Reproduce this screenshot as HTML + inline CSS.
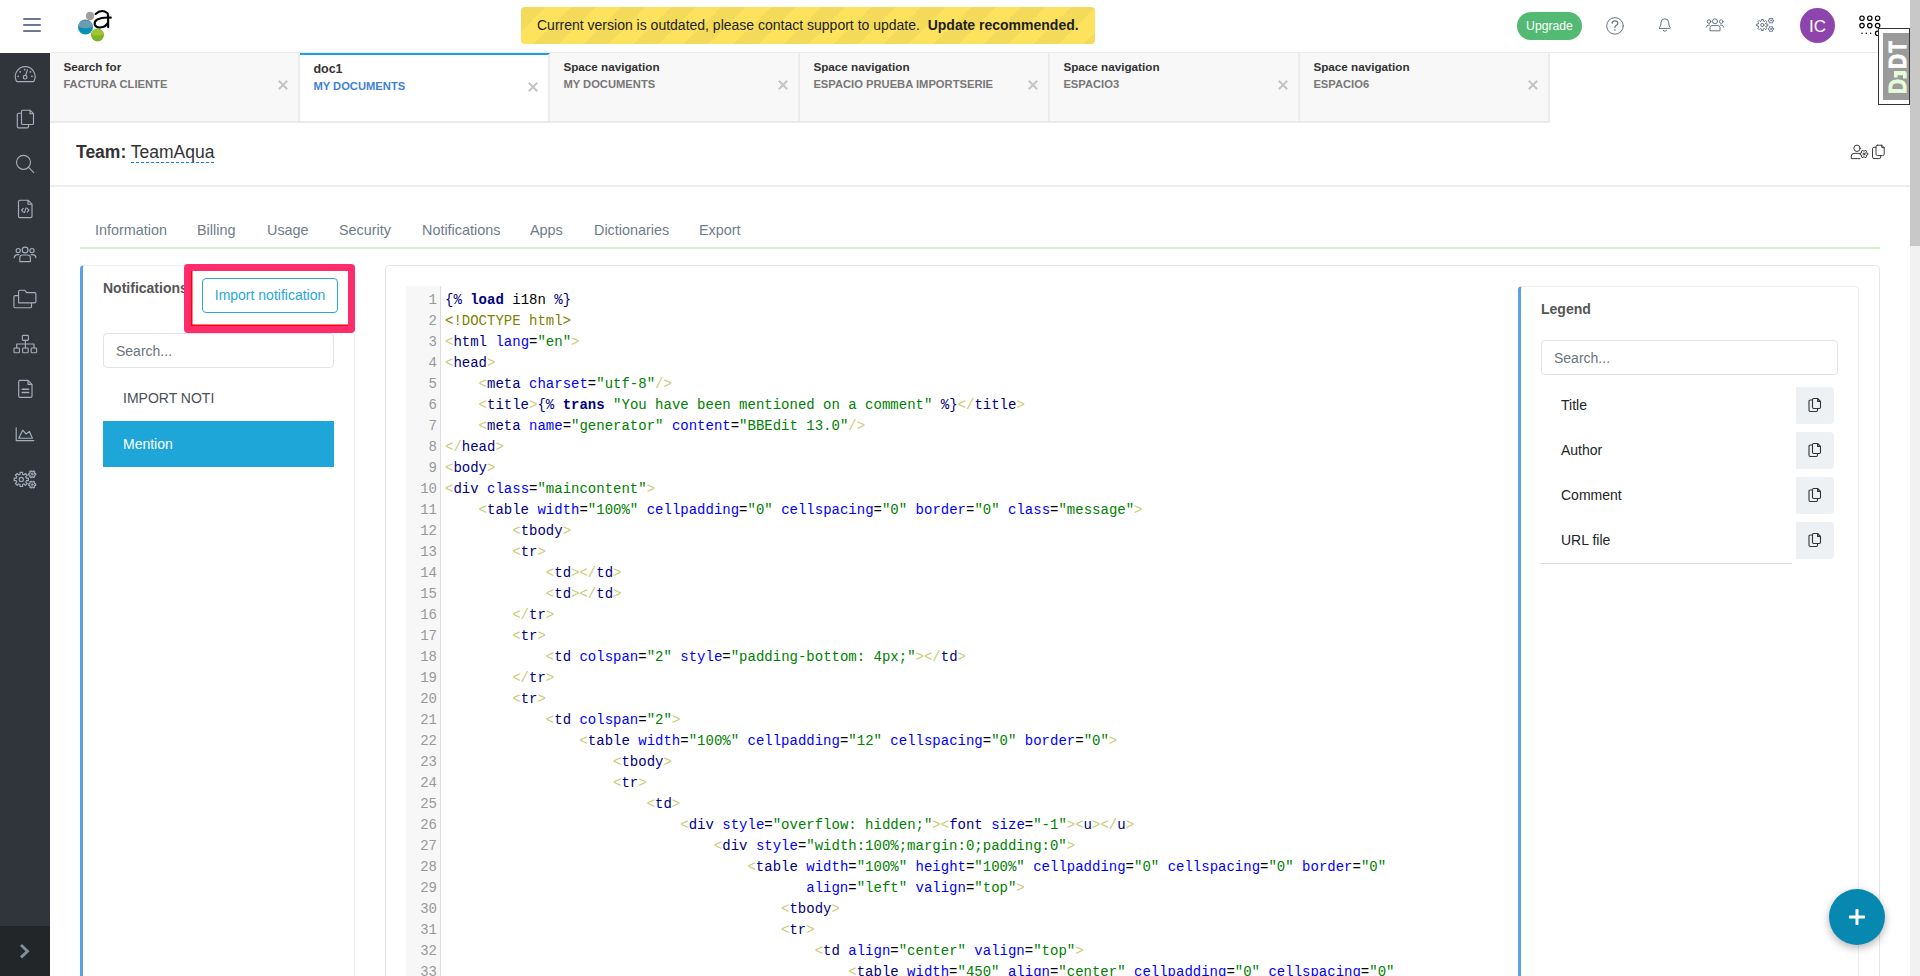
<!DOCTYPE html>
<html><head><meta charset="utf-8">
<style>
*{box-sizing:border-box}
html,body{margin:0;padding:0;width:1920px;height:976px;overflow:hidden;background:#fff;font-family:"Liberation Sans",sans-serif;color:#333}
.abs{position:absolute}
#hdr{position:absolute;left:0;top:0;width:1910px;height:52px;background:#fff}
.hamb{position:absolute;left:23px;width:18px;height:2px;background:#6b7a8a;border-radius:1px}
#banner{position:absolute;left:521px;top:7px;width:574px;height:37px;border-radius:4px;background-color:#fde25e;
 background-image:linear-gradient(-45deg,rgba(0,0,0,.035) 25%,transparent 25%,transparent 50%,rgba(0,0,0,.035) 50%,rgba(0,0,0,.035) 75%,transparent 75%,transparent);
 background-size:50px 50px;background-position:25px 0;font-size:14px;color:#1f1f1f;line-height:37px;padding-left:16px;white-space:nowrap}
#upg{position:absolute;left:1517px;top:12px;width:65px;height:28px;border-radius:14px;background:#52ba72;color:#fff;font-size:12.2px;line-height:28px;text-align:center}
#avatar{position:absolute;left:1800px;top:8px;width:35px;height:35px;border-radius:50%;background:#8e44ad;color:#fff;font-size:17px;line-height:37px;text-align:center}
#sb{position:absolute;left:0;top:53px;width:50px;height:923px;background:#30353c}
#sbb{position:absolute;left:0;top:926px;width:50px;height:50px;background:#222629}
#scroll{position:absolute;left:1910px;top:0;width:10px;height:976px;background:#f1f1f1}
#thumb{position:absolute;left:1910px;top:0;width:10px;height:246px;background:#c8c8c8}
#tabs{position:absolute;left:50px;top:52px;width:1860px;height:71px;border-top:1px solid #ececec}
.tab{position:absolute;top:0;width:250px;height:70px;background:#f8f8f8;border-right:2px solid #ececec;border-bottom:2px solid #eaeaea}
.tab .t1{position:absolute;left:13.4px;top:7px;font-size:11.7px;font-weight:bold;color:#333}
.tab .t2{position:absolute;left:13.4px;top:25px;font-size:11.2px;font-weight:bold;color:#777}
.tab .x{position:absolute;left:227px;top:26px;width:12px;height:12px}
.tab.act{background:#fff;border-top:2px solid #1da1db;top:0;height:70px}
.tab.act .t1{top:7px;font-size:12.5px}
.tab.act .t2{color:#3f7fd8;top:25px}
.tab.act .x{top:26px}
#tbot{position:absolute;left:50px;top:121px;width:1860px;height:2px;background:#eee}
#team{position:absolute;left:76px;top:142px;font-size:17.5px;color:#333;white-space:nowrap}
#team b{font-weight:bold}
#team u{text-decoration:none}
#div1{position:absolute;left:50px;top:185px;width:1860px;height:2px;background:#eee}
#nav{position:absolute;left:79px;top:222px;font-size:14.4px;color:#6f7c8a;white-space:nowrap}
#nav span{position:absolute;top:0}
#gline{position:absolute;left:80px;top:247px;width:1800px;height:2px;background:#d9edd1}
#lp{position:absolute;left:80px;top:265px;width:275px;height:720px;border:1px solid #eee;border-left:3px solid #5aa2e2;border-radius:4px}
#redbox{position:absolute;left:184px;top:264px;width:171px;height:68.5px;border:7px solid #fe2c6a;border-radius:4px;box-shadow:inset 1.5px -1.5px 0 #ff0008}
#impbtn{position:absolute;left:202px;top:278px;width:136px;height:35px;border:1px solid #28a8d8;border-radius:4px;color:#28a8d8;font-size:14px;line-height:33px;text-align:center}
.srch{position:absolute;border:1px solid #e3e3e3;border-radius:4px;font-size:14px;color:#6c757d;padding-left:12px}
#mention{position:absolute;left:103px;top:421px;width:231px;height:46px;background:#1fa6d9;color:#fff;font-size:14px;line-height:47px;padding-left:20px}
#cp{position:absolute;left:385px;top:265px;width:1495px;height:720px;border:1px solid #e6e6e6;border-radius:4px}
#gut{position:absolute;left:406px;top:286px;width:35px;height:700px;background:#f7f7f7;border-right:1px solid #ddd}
#code{position:absolute;left:406px;top:290px;width:1100px}
.ln{position:relative;height:21px;line-height:21px;font-family:"Liberation Mono",monospace;font-size:14px;white-space:pre}
.ln .no{position:absolute;left:0;width:31px;text-align:right;color:#999}
.ln pre{margin:0;position:absolute;left:39px;top:0;font:inherit;color:#000}
.t{color:#000080}.k{color:#000080;font-weight:bold}.a{color:#0000ff}.s{color:#008000}.b{color:#cc7}.m{color:#808000}
#lg{position:absolute;left:1518px;top:286px;width:341px;height:700px;border:1px solid #eee;border-left:3px solid #5aa2e2;border-radius:4px}
.li{position:absolute;left:1561px;font-size:14px;color:#212529}
.cbtn{position:absolute;left:1796px;width:38px;height:37px;background:#eef1f4;border-radius:0 4px 4px 0}
#fab{position:absolute;left:1829px;top:889px;width:56px;height:56px;border-radius:50%;background:#0788b0;box-shadow:0 3px 8px rgba(0,0,0,.3)}
</style></head>
<body>
<div id="hdr">
  <div class="hamb" style="top:18px"></div><div class="hamb" style="top:24px"></div><div class="hamb" style="top:30px"></div>
  <svg class="abs" style="left:76px;top:8px" width="40" height="36" viewBox="0 0 40 36">
    <circle cx="14" cy="8" r="4.2" fill="#a39d99"/>
    <circle cx="9.5" cy="19" r="7.5" fill="#0791b8"/>
    <path d="M2.2 18.2 A7.5 7.5 0 0 1 16.8 18 A8 3.5 0 0 1 2.2 18.2Z" fill="#6d9bb0"/>
    <circle cx="21.5" cy="27" r="6.5" fill="#7cb32a"/>
    <path d="M15.2 26 A6.5 6.5 0 0 1 27.8 26 A7 3 0 0 1 15.2 26Z" fill="#a2c431"/>
    <path d="M19.6 6 Q25.5 0.6 31.3 5 Q32.1 6 32.1 8 L32.2 19.2" fill="none" stroke="#000" stroke-width="2.1" stroke-linecap="round"/><path d="M34.8 9.6 Q26 9 21 11.6 Q18 13.6 18.8 16.6 Q20.2 20.2 25.5 19.3 Q30.2 18.6 32 14.5" fill="none" stroke="#000" stroke-width="2.1" stroke-linecap="round"/>
  </svg>
  <div id="banner">Current version is outdated, please contact support to update. &nbsp;<b>Update recommended.</b></div>
  <div id="upg">Upgrade</div>
  <div id="avatar">IC</div>
<svg class="abs" style="left:1590px;top:0" width="200" height="52" viewBox="1590 0 200 52" fill="none" stroke="#66768a" stroke-width="1" stroke-linecap="round" stroke-linejoin="round">
<circle cx="1615" cy="25.9" r="8.3"/>
<path d="M1612.2 23.2 Q1612.2 20.9 1615 20.9 Q1617.8 20.9 1617.8 23.2 Q1617.8 24.6 1616.2 25.4 Q1614.9 26.1 1614.9 27.6" stroke-width="1.3"/>
<rect x="1614.2" y="29.3" width="1.4" height="1.4" fill="#66768a" stroke="none"/>
<path d="M1659.5 28.4 H1670.2 Q1670.6 28.4 1670.4 27.7 Q1668.9 26.2 1668.8 24 V22.8 Q1668.7 18.8 1664.85 18.8 Q1661 18.8 1660.9 22.8 V24 Q1660.8 26.2 1659.3 27.7 Q1659.1 28.4 1659.5 28.4Z"/>
<path d="M1663.2 30.3 L1664.85 31.3 L1666.5 30.3"/>
<circle cx="1715" cy="21.3" r="2.5"/><circle cx="1709" cy="21.6" r="1.8"/><circle cx="1721.2" cy="21.6" r="1.8"/>
<path d="M1710 30.4 V27.6 Q1710 25.6 1712 25.6 H1718 Q1720 25.6 1720 27.6 V30.4 Z"/>
<path d="M1706.2 27.2 Q1706.6 25.1 1708.8 25.1 H1709.6 M1723.8 27.2 Q1723.4 25.1 1721.2 25.1 H1720.4"/>
<path d="M1766.28 24.03 L1767.81 24.02 L1767.81 25.98 L1766.28 25.97 L1765.80 27.13 L1766.89 28.20 L1765.50 29.59 L1764.43 28.50 L1763.27 28.98 L1763.28 30.51 L1761.32 30.51 L1761.33 28.98 L1760.17 28.50 L1759.10 29.59 L1757.71 28.20 L1758.80 27.13 L1758.32 25.97 L1756.79 25.98 L1756.79 24.02 L1758.32 24.03 L1758.80 22.87 L1757.71 21.80 L1759.10 20.41 L1760.17 21.50 L1761.33 21.02 L1761.32 19.49 L1763.28 19.49 L1763.27 21.02 L1764.43 21.50 L1765.50 20.41 L1766.89 21.80 L1765.80 22.87Z"/><circle cx="1762.3" cy="25" r="1.6"/>
<path d="M1772.90 19.97 L1773.63 19.97 L1773.63 21.23 L1772.90 21.23 L1772.49 21.93 L1772.86 22.56 L1771.77 23.19 L1771.41 22.56 L1770.59 22.56 L1770.23 23.19 L1769.14 22.56 L1769.51 21.93 L1769.10 21.23 L1768.37 21.23 L1768.37 19.97 L1769.10 19.97 L1769.51 19.27 L1769.14 18.64 L1770.23 18.01 L1770.59 18.64 L1771.41 18.64 L1771.77 18.01 L1772.86 18.64 L1772.49 19.27Z" stroke-width="1"/><circle cx="1771" cy="20.6" r="0.6" stroke-width="0.8"/>
<path d="M1772.90 28.37 L1773.63 28.37 L1773.63 29.63 L1772.90 29.63 L1772.49 30.33 L1772.86 30.96 L1771.77 31.59 L1771.41 30.96 L1770.59 30.96 L1770.23 31.59 L1769.14 30.96 L1769.51 30.33 L1769.10 29.63 L1768.37 29.63 L1768.37 28.37 L1769.10 28.37 L1769.51 27.67 L1769.14 27.04 L1770.23 26.41 L1770.59 27.04 L1771.41 27.04 L1771.77 26.41 L1772.86 27.04 L1772.49 27.67Z" stroke-width="1"/><circle cx="1771" cy="29" r="0.6" stroke-width="0.8"/>
</svg>
<svg class="abs" style="left:1855px;top:10px" width="30" height="30" viewBox="1855 10 30 30" fill="none" stroke="#000" stroke-width="1.2">
<circle cx="1862" cy="18.2" r="2.2"/>
<circle cx="1869.8" cy="18.2" r="2.2"/>
<circle cx="1877.6" cy="18.2" r="2.2"/>
<circle cx="1862" cy="25.6" r="2.2"/>
<circle cx="1869.8" cy="25.6" r="2.2"/>
<circle cx="1877.6" cy="25.6" r="2.2"/>
<circle cx="1877.6" cy="33.3" r="2.2"/>
<circle cx="1862" cy="33.3" r="0.75" fill="#000" stroke="none"/>
<circle cx="1866.3" cy="33.3" r="0.75" fill="#000" stroke="none"/>
<circle cx="1870.6" cy="33.3" r="0.75" fill="#000" stroke="none"/>
</svg>
</div>
<div class="abs" style="left:1878px;top:28px;width:32px;height:77px;border:1px solid #333;background:#fff;z-index:5"></div>
<div class="abs" style="left:1883px;top:33px;width:26px;height:67px;background:#9b9b9b;z-index:5"></div>
<svg class="abs" style="left:1883px;top:33px;z-index:7" width="26" height="67" viewBox="1883 33 26 67">
<g font-family="Liberation Sans" font-weight="bold" font-size="24">
<text fill="#e5fcd8" stroke="#e5fcd8" stroke-width="0.9" transform="translate(1906.4 92.5) rotate(-90) scale(0.87 1) translate(-1.706 0)">D</text>
<text fill="#fff" stroke="#fff" stroke-width="0.9" transform="translate(1906.4 67.6) rotate(-90) scale(0.87 1) translate(-1.706 0)">D</text>
<text fill="#fff" stroke="#fff" stroke-width="0.9" transform="translate(1906.4 52.2) rotate(-90) scale(0.78 1) translate(-0.286 0)">T</text>
</g>
<path d="M1894 71 H1904.4 Q1906.7 71 1906.7 73.4 V78.4 H1903 V75.2 H1897.6 V77.4 H1894 Z" fill="#e5fcd8"/>
</svg>

<div id="scroll"></div><div id="thumb"></div>
<div id="sb"></div><div id="sbb"></div>
<svg class="abs" style="left:0;top:53px" width="50" height="923" viewBox="0 53 50 923" fill="none" stroke="#a3aebb" stroke-width="1.15" stroke-linecap="round" stroke-linejoin="round">
<path d="M17.6 81.6 H32.8 Q33.8 81.6 34.2 80.7 A9.9 9.9 0 1 0 16.2 80.7 Q16.6 81.6 17.6 81.6Z"/>
<circle cx="25.1" cy="77.2" r="1.8"/><path d="M25.6 75.5 L27.4 69.8"/>
<circle cx="20.2" cy="71.8" r="0.35" fill="#a3aebb"/>
<circle cx="24.7" cy="69.6" r="0.35" fill="#a3aebb"/>
<circle cx="30.4" cy="71.8" r="0.35" fill="#a3aebb"/>
<circle cx="18.1" cy="76.3" r="0.35" fill="#a3aebb"/>
<circle cx="31.9" cy="76.3" r="0.35" fill="#a3aebb"/>
<path d="M21.5 113.2 H18.6 Q17.3 113.2 17.3 114.5 V126.6 Q17.3 127.9 18.6 127.9 H27.2 Q28.5 127.9 28.5 126.6 V124.5"/>
<path d="M22.8 110.2 H30 L33.5 113.7 V123.2 Q33.5 124.5 32.2 124.5 H22.8 Q21.5 124.5 21.5 123.2 V111.5 Q21.5 110.2 22.8 110.2Z M30 110.2 V113.7 H33.5"/>
<circle cx="23.5" cy="162.3" r="7"/><path d="M28.6 167.4 L33.8 172.6"/>
<path d="M19.8 200.2 H28 L32 204.2 V216.3 Q32 217.6 30.7 217.6 H19.8 Q18.5 217.6 18.5 216.3 V201.5 Q18.5 200.2 19.8 200.2Z M28 200.2 V204.2 H32"/>
<path d="M23.3 208.3 L21.6 210.2 L23.3 212.1 M27.2 208.3 L28.9 210.2 L27.2 212.1 M26 207.8 L24.5 212.6" stroke-width="1.1"/>
<circle cx="25.1" cy="250" r="2.9"/><circle cx="18.2" cy="250.6" r="2.1"/><circle cx="32" cy="250.6" r="2.1"/>
<path d="M19.8 261.6 V257.8 Q19.8 255 22.6 255 H27.6 Q30.4 255 30.4 257.8 V261.6 Z"/>
<path d="M14.2 257.6 Q14.6 254.6 17.6 254.6 H19 M36 257.6 Q35.6 254.6 32.6 254.6 H31.2"/>
<path d="M18.5 295.6 H15.2 Q13.9 295.6 13.9 296.9 V306.4 Q13.9 307.7 15.2 307.7 H30.2 Q31.5 307.7 31.5 306.4 V303.2"/>
<path d="M18.6 302.9 V291.5 Q18.6 290.2 19.9 290.2 H24.6 L26.6 292.6 H34.6 Q35.9 292.6 35.9 293.9 V301.6 Q35.9 302.9 34.6 302.9 Z"/>
<rect x="22.4" y="335.4" width="6" height="5" rx="0.8"/><path d="M25.4 340.4 V344 M16.7 348 V344 H34 V348 M25.4 344 V348"/>
<rect x="14" y="348" width="5.4" height="4.7" rx="0.8"/><rect x="22.6" y="348" width="5.6" height="4.7" rx="0.8"/><rect x="31.2" y="348" width="5.4" height="4.7" rx="0.8"/>
<path d="M20 380.4 H28 L32 384.4 V396.1 Q32 397.4 30.7 397.4 H20 Q18.7 397.4 18.7 396.1 V381.7 Q18.7 380.4 20 380.4Z M28 380.4 V384.4 H32"/>
<path d="M22.2 389.3 H28.6 M22.2 392.4 H28.6" stroke-width="1.5"/>
<path d="M16.2 427.8 V440.6 H33.8"/><path d="M18.8 438.2 L22.6 430.2 L26.2 434 L29.4 431.4 L32.4 438.2 Z"/>
<path d="M26.35 478.17 L28.39 478.13 L28.39 480.67 L26.35 480.63 L25.74 482.10 L27.21 483.52 L25.42 485.31 L24.00 483.84 L22.53 484.45 L22.57 486.49 L20.03 486.49 L20.07 484.45 L18.60 483.84 L17.18 485.31 L15.39 483.52 L16.86 482.10 L16.25 480.63 L14.21 480.67 L14.21 478.13 L16.25 478.17 L16.86 476.70 L15.39 475.28 L17.18 473.49 L18.60 474.96 L20.07 474.35 L20.03 472.31 L22.57 472.31 L22.53 474.35 L24.00 474.96 L25.42 473.49 L27.21 475.28 L25.74 476.70Z"/><circle cx="21.3" cy="479.4" r="2.1"/>
<path d="M34.67 473.38 L35.70 473.36 L35.70 475.04 L34.67 475.02 L34.14 475.93 L34.68 476.81 L33.22 477.65 L32.73 476.75 L31.67 476.75 L31.18 477.65 L29.72 476.81 L30.26 475.93 L29.73 475.02 L28.70 475.04 L28.70 473.36 L29.73 473.38 L30.26 472.47 L29.72 471.59 L31.18 470.75 L31.67 471.65 L32.73 471.65 L33.22 470.75 L34.68 471.59 L34.14 472.47Z" stroke-width="1.1"/><circle cx="32.2" cy="474.2" r="0.9" stroke-width="1"/>
<path d="M34.67 483.78 L35.70 483.76 L35.70 485.44 L34.67 485.42 L34.14 486.33 L34.68 487.21 L33.22 488.05 L32.73 487.15 L31.67 487.15 L31.18 488.05 L29.72 487.21 L30.26 486.33 L29.73 485.42 L28.70 485.44 L28.70 483.76 L29.73 483.78 L30.26 482.87 L29.72 481.99 L31.18 481.15 L31.67 482.05 L32.73 482.05 L33.22 481.15 L34.68 481.99 L34.14 482.87Z" stroke-width="1.1"/><circle cx="32.2" cy="484.6" r="0.9" stroke-width="1"/>
<path d="M21 945 L27.5 951.2 L21 957.4" stroke="#808e9c" stroke-width="2.9" stroke-linecap="butt" stroke-linejoin="miter"/>
</svg>

<div id="tabs">
  <div class="tab" style="left:0"><div class="t1">Search for</div><div class="t2">FACTURA CLIENTE</div><svg class="x" viewBox="0 0 12 12"><path d="M1.8 1.8L10.2 10.2M10.2 1.8L1.8 10.2" stroke="#c6c6c6" stroke-width="2.2"/></svg></div>
  <div class="tab act" style="left:250px"><div class="t1">doc1</div><div class="t2">MY DOCUMENTS</div><svg class="x" viewBox="0 0 12 12"><path d="M1.8 1.8L10.2 10.2M10.2 1.8L1.8 10.2" stroke="#c6c6c6" stroke-width="2.2"/></svg></div>
  <div class="tab" style="left:500px"><div class="t1">Space navigation</div><div class="t2">MY DOCUMENTS</div><svg class="x" viewBox="0 0 12 12"><path d="M1.8 1.8L10.2 10.2M10.2 1.8L1.8 10.2" stroke="#c6c6c6" stroke-width="2.2"/></svg></div>
  <div class="tab" style="left:750px"><div class="t1">Space navigation</div><div class="t2">ESPACIO PRUEBA IMPORTSERIE</div><svg class="x" viewBox="0 0 12 12"><path d="M1.8 1.8L10.2 10.2M10.2 1.8L1.8 10.2" stroke="#c6c6c6" stroke-width="2.2"/></svg></div>
  <div class="tab" style="left:1000px"><div class="t1">Space navigation</div><div class="t2">ESPACIO3</div><svg class="x" viewBox="0 0 12 12"><path d="M1.8 1.8L10.2 10.2M10.2 1.8L1.8 10.2" stroke="#c6c6c6" stroke-width="2.2"/></svg></div>
  <div class="tab" style="left:1250px"><div class="t1">Space navigation</div><div class="t2">ESPACIO6</div><svg class="x" viewBox="0 0 12 12"><path d="M1.8 1.8L10.2 10.2M10.2 1.8L1.8 10.2" stroke="#c6c6c6" stroke-width="2.2"/></svg></div>
</div>

<div id="team"><b>Team:</b> <u>TeamAqua</u></div>
<div class="abs" style="left:131px;top:162px;width:83px;height:1.2px;background:repeating-linear-gradient(90deg,#0f84d2 0 3px,transparent 3px 5px)"></div>
<div id="div1"></div>
<div id="nav">
  <span style="left:16px">Information</span><span style="left:118px">Billing</span><span style="left:188px">Usage</span><span style="left:260px">Security</span><span style="left:343px">Notifications</span><span style="left:451px">Apps</span><span style="left:515px">Dictionaries</span><span style="left:620px">Export</span>
</div>
<div id="gline"></div>

<div id="lp"></div>
<div class="abs" style="left:103px;top:280px;font-size:14px;font-weight:bold;color:#555">Notifications</div>
<div id="redbox"></div>
<div id="impbtn">Import notification</div>
<div class="srch" style="left:103px;top:333px;width:231px;height:35px;line-height:35px">Search...</div>
<div class="abs" style="left:123px;top:390px;font-size:14px;color:#4a5058">IMPORT NOTI</div>
<div id="mention">Mention</div>

<div id="cp"></div>
<div id="gut"></div>
<div id="code">
<div class="ln"><span class="no">1</span><pre><span class="t">{%</span> <span class="k">load</span> i18n <span class="t">%}</span></pre></div>
<div class="ln"><span class="no">2</span><pre><span class="m">&lt;!DOCTYPE html&gt;</span></pre></div>
<div class="ln"><span class="no">3</span><pre><span class="b">&lt;</span><span class="t">html</span> <span class="a">lang</span>=<span class="s">"en"</span><span class="b">&gt;</span></pre></div>
<div class="ln"><span class="no">4</span><pre><span class="b">&lt;</span><span class="t">head</span><span class="b">&gt;</span></pre></div>
<div class="ln"><span class="no">5</span><pre>    <span class="b">&lt;</span><span class="t">meta</span> <span class="a">charset</span>=<span class="s">"utf-8"</span><span class="b">/&gt;</span></pre></div>
<div class="ln"><span class="no">6</span><pre>    <span class="b">&lt;</span><span class="t">title</span><span class="b">&gt;</span><span class="t">{%</span> <span class="k">trans</span> <span class="s">"You have been mentioned on a comment"</span> <span class="t">%}</span><span class="b">&lt;/</span><span class="t">title</span><span class="b">&gt;</span></pre></div>
<div class="ln"><span class="no">7</span><pre>    <span class="b">&lt;</span><span class="t">meta</span> <span class="a">name</span>=<span class="s">"generator"</span> <span class="a">content</span>=<span class="s">"BBEdit 13.0"</span><span class="b">/&gt;</span></pre></div>
<div class="ln"><span class="no">8</span><pre><span class="b">&lt;/</span><span class="t">head</span><span class="b">&gt;</span></pre></div>
<div class="ln"><span class="no">9</span><pre><span class="b">&lt;</span><span class="t">body</span><span class="b">&gt;</span></pre></div>
<div class="ln"><span class="no">10</span><pre><span class="b">&lt;</span><span class="t">div</span> <span class="a">class</span>=<span class="s">"maincontent"</span><span class="b">&gt;</span></pre></div>
<div class="ln"><span class="no">11</span><pre>    <span class="b">&lt;</span><span class="t">table</span> <span class="a">width</span>=<span class="s">"100%"</span> <span class="a">cellpadding</span>=<span class="s">"0"</span> <span class="a">cellspacing</span>=<span class="s">"0"</span> <span class="a">border</span>=<span class="s">"0"</span> <span class="a">class</span>=<span class="s">"message"</span><span class="b">&gt;</span></pre></div>
<div class="ln"><span class="no">12</span><pre>        <span class="b">&lt;</span><span class="t">tbody</span><span class="b">&gt;</span></pre></div>
<div class="ln"><span class="no">13</span><pre>        <span class="b">&lt;</span><span class="t">tr</span><span class="b">&gt;</span></pre></div>
<div class="ln"><span class="no">14</span><pre>            <span class="b">&lt;</span><span class="t">td</span><span class="b">&gt;</span><span class="b">&lt;/</span><span class="t">td</span><span class="b">&gt;</span></pre></div>
<div class="ln"><span class="no">15</span><pre>            <span class="b">&lt;</span><span class="t">td</span><span class="b">&gt;</span><span class="b">&lt;/</span><span class="t">td</span><span class="b">&gt;</span></pre></div>
<div class="ln"><span class="no">16</span><pre>        <span class="b">&lt;/</span><span class="t">tr</span><span class="b">&gt;</span></pre></div>
<div class="ln"><span class="no">17</span><pre>        <span class="b">&lt;</span><span class="t">tr</span><span class="b">&gt;</span></pre></div>
<div class="ln"><span class="no">18</span><pre>            <span class="b">&lt;</span><span class="t">td</span> <span class="a">colspan</span>=<span class="s">"2"</span> <span class="a">style</span>=<span class="s">"padding-bottom: 4px;"</span><span class="b">&gt;</span><span class="b">&lt;/</span><span class="t">td</span><span class="b">&gt;</span></pre></div>
<div class="ln"><span class="no">19</span><pre>        <span class="b">&lt;/</span><span class="t">tr</span><span class="b">&gt;</span></pre></div>
<div class="ln"><span class="no">20</span><pre>        <span class="b">&lt;</span><span class="t">tr</span><span class="b">&gt;</span></pre></div>
<div class="ln"><span class="no">21</span><pre>            <span class="b">&lt;</span><span class="t">td</span> <span class="a">colspan</span>=<span class="s">"2"</span><span class="b">&gt;</span></pre></div>
<div class="ln"><span class="no">22</span><pre>                <span class="b">&lt;</span><span class="t">table</span> <span class="a">width</span>=<span class="s">"100%"</span> <span class="a">cellpadding</span>=<span class="s">"12"</span> <span class="a">cellspacing</span>=<span class="s">"0"</span> <span class="a">border</span>=<span class="s">"0"</span><span class="b">&gt;</span></pre></div>
<div class="ln"><span class="no">23</span><pre>                    <span class="b">&lt;</span><span class="t">tbody</span><span class="b">&gt;</span></pre></div>
<div class="ln"><span class="no">24</span><pre>                    <span class="b">&lt;</span><span class="t">tr</span><span class="b">&gt;</span></pre></div>
<div class="ln"><span class="no">25</span><pre>                        <span class="b">&lt;</span><span class="t">td</span><span class="b">&gt;</span></pre></div>
<div class="ln"><span class="no">26</span><pre>                            <span class="b">&lt;</span><span class="t">div</span> <span class="a">style</span>=<span class="s">"overflow: hidden;"</span><span class="b">&gt;</span><span class="b">&lt;</span><span class="t">font</span> <span class="a">size</span>=<span class="s">"-1"</span><span class="b">&gt;</span><span class="b">&lt;</span><span class="t">u</span><span class="b">&gt;</span><span class="b">&lt;/</span><span class="t">u</span><span class="b">&gt;</span></pre></div>
<div class="ln"><span class="no">27</span><pre>                                <span class="b">&lt;</span><span class="t">div</span> <span class="a">style</span>=<span class="s">"width:100%;margin:0;padding:0"</span><span class="b">&gt;</span></pre></div>
<div class="ln"><span class="no">28</span><pre>                                    <span class="b">&lt;</span><span class="t">table</span> <span class="a">width</span>=<span class="s">"100%"</span> <span class="a">height</span>=<span class="s">"100%"</span> <span class="a">cellpadding</span>=<span class="s">"0"</span> <span class="a">cellspacing</span>=<span class="s">"0"</span> <span class="a">border</span>=<span class="s">"0"</span></pre></div>
<div class="ln"><span class="no">29</span><pre>                                           <span class="a">align</span>=<span class="s">"left"</span> <span class="a">valign</span>=<span class="s">"top"</span><span class="b">&gt;</span></pre></div>
<div class="ln"><span class="no">30</span><pre>                                        <span class="b">&lt;</span><span class="t">tbody</span><span class="b">&gt;</span></pre></div>
<div class="ln"><span class="no">31</span><pre>                                        <span class="b">&lt;</span><span class="t">tr</span><span class="b">&gt;</span></pre></div>
<div class="ln"><span class="no">32</span><pre>                                            <span class="b">&lt;</span><span class="t">td</span> <span class="a">align</span>=<span class="s">"center"</span> <span class="a">valign</span>=<span class="s">"top"</span><span class="b">&gt;</span></pre></div>
<div class="ln"><span class="no">33</span><pre>                                                <span class="b">&lt;</span><span class="t">table</span> <span class="a">width</span>=<span class="s">"450"</span> <span class="a">align</span>=<span class="s">"center"</span> <span class="a">cellpadding</span>=<span class="s">"0"</span> <span class="a">cellspacing</span>=<span class="s">"0"</span></pre></div>
</div>

<div id="lg"></div>
<div class="abs" style="left:1541px;top:301px;font-size:14px;font-weight:bold;color:#555">Legend</div>
<div class="srch" style="left:1541px;top:340px;width:297px;height:35px;line-height:35px">Search...</div>
<div class="li" style="top:397px">Title</div><div class="cbtn" style="top:387px"></div>
<div class="li" style="top:442px">Author</div><div class="cbtn" style="top:432px"></div>
<div class="li" style="top:487px">Comment</div><div class="cbtn" style="top:477px"></div>
<div class="li" style="top:532px">URL file</div><div class="cbtn" style="top:522px"></div>
<div class="abs" style="left:1541px;top:563px;width:251px;height:1px;background:#ddd"></div>

<svg class="abs" style="left:1808px;top:397px" width="14" height="16" viewBox="0 0 14 16" fill="none" stroke="#333" stroke-width="1.1" stroke-linejoin="round"><path d="M4.5 3H2.2Q1 3 1 4.2V13.3Q1 14.5 2.2 14.5H8.3Q9.5 14.5 9.5 13.3V11.5"/><path d="M5.7 1.5H9.6L12.5 4.4V10.3Q12.5 11.5 11.3 11.5H5.7Q4.5 11.5 4.5 10.3V2.7Q4.5 1.5 5.7 1.5Z M9.6 1.5V4.4H12.5"/></svg>
<svg class="abs" style="left:1808px;top:442px" width="14" height="16" viewBox="0 0 14 16" fill="none" stroke="#333" stroke-width="1.1" stroke-linejoin="round"><path d="M4.5 3H2.2Q1 3 1 4.2V13.3Q1 14.5 2.2 14.5H8.3Q9.5 14.5 9.5 13.3V11.5"/><path d="M5.7 1.5H9.6L12.5 4.4V10.3Q12.5 11.5 11.3 11.5H5.7Q4.5 11.5 4.5 10.3V2.7Q4.5 1.5 5.7 1.5Z M9.6 1.5V4.4H12.5"/></svg>
<svg class="abs" style="left:1808px;top:487px" width="14" height="16" viewBox="0 0 14 16" fill="none" stroke="#333" stroke-width="1.1" stroke-linejoin="round"><path d="M4.5 3H2.2Q1 3 1 4.2V13.3Q1 14.5 2.2 14.5H8.3Q9.5 14.5 9.5 13.3V11.5"/><path d="M5.7 1.5H9.6L12.5 4.4V10.3Q12.5 11.5 11.3 11.5H5.7Q4.5 11.5 4.5 10.3V2.7Q4.5 1.5 5.7 1.5Z M9.6 1.5V4.4H12.5"/></svg>
<svg class="abs" style="left:1808px;top:532px" width="14" height="16" viewBox="0 0 14 16" fill="none" stroke="#333" stroke-width="1.1" stroke-linejoin="round"><path d="M4.5 3H2.2Q1 3 1 4.2V13.3Q1 14.5 2.2 14.5H8.3Q9.5 14.5 9.5 13.3V11.5"/><path d="M5.7 1.5H9.6L12.5 4.4V10.3Q12.5 11.5 11.3 11.5H5.7Q4.5 11.5 4.5 10.3V2.7Q4.5 1.5 5.7 1.5Z M9.6 1.5V4.4H12.5"/></svg>
<svg class="abs" style="left:1845px;top:140px" width="45" height="25" viewBox="1845 140 45 25" fill="none" stroke="#333" stroke-width="0.95" stroke-linejoin="round" stroke-linecap="round">
<circle cx="1857" cy="148.3" r="3.2"/>
<path d="M1860.2 153.4 H1854 Q1851.3 153.4 1851.3 156.1 V158.6 H1860"/>
<path d="M1866.75 153.09 L1867.79 153.09 L1867.79 154.91 L1866.75 154.91 L1866.17 155.93 L1866.68 156.83 L1865.11 157.74 L1864.59 156.84 L1863.41 156.84 L1862.89 157.74 L1861.32 156.83 L1861.83 155.93 L1861.25 154.91 L1860.21 154.91 L1860.21 153.09 L1861.25 153.09 L1861.83 152.07 L1861.32 151.17 L1862.89 150.26 L1863.41 151.16 L1864.59 151.16 L1865.11 150.26 L1866.68 151.17 L1866.17 152.07Z"/><circle cx="1864" cy="154" r="1" />
<path d="M1876 147.3 H1874 Q1872.5 147.3 1872.5 148.8 V157.1 Q1872.5 158.6 1874 158.6 H1879.2 Q1880.7 158.6 1880.7 157.1 V155.6"/>
<path d="M1877.5 145.2 H1881.8 L1884.2 147.6 V154.1 Q1884.2 155.6 1882.7 155.6 H1877.5 Q1876 155.6 1876 154.1 V146.7 Q1876 145.2 1877.5 145.2Z M1881.8 145.2 V147.6 H1884.2"/>
</svg>
<div id="fab"><svg class="abs" style="left:20px;top:20px" width="16" height="16" viewBox="0 0 16 16"><path d="M8 1V15M1 8H15" stroke="#fff" stroke-width="3" stroke-linecap="round"/></svg></div>
</body></html>
